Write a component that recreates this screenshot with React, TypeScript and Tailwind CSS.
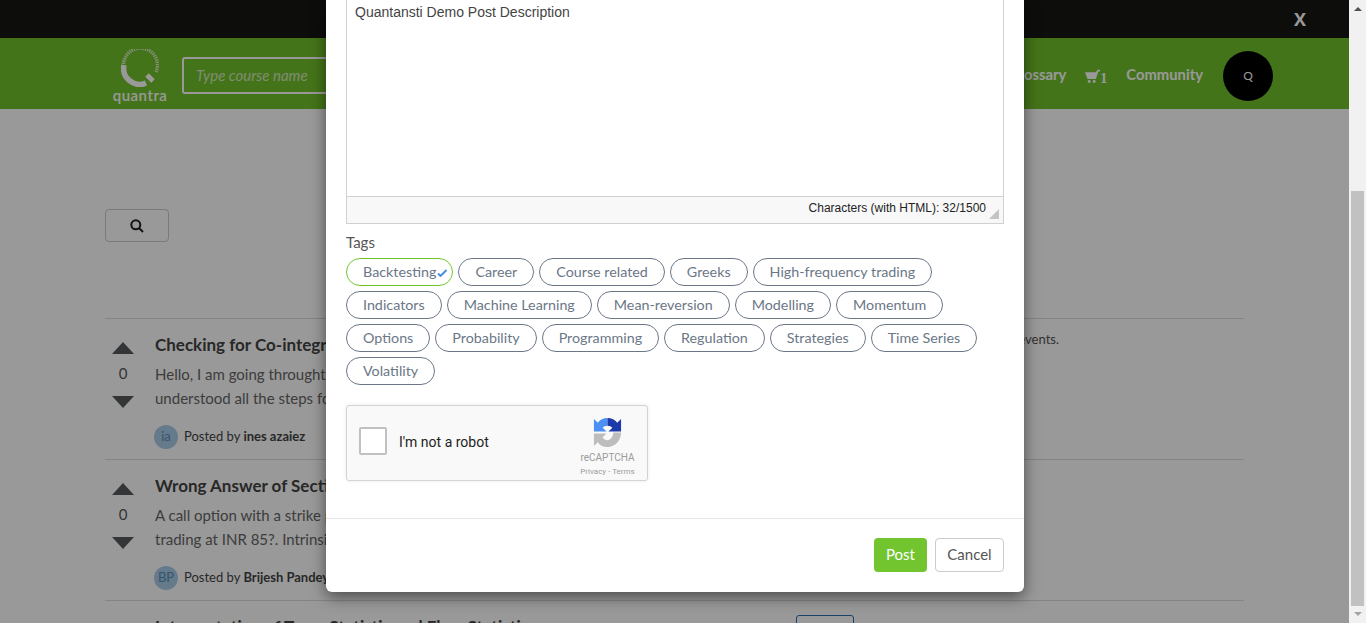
import React from 'react';

const tags = [
  'Backtesting', 'Career', 'Course related', 'Greeks', 'High-frequency trading',
  'Indicators', 'Machine Learning', 'Mean-reversion', 'Modelling', 'Momentum',
  'Options', 'Probability', 'Programming', 'Regulation', 'Strategies', 'Time Series',
  'Volatility',
];

const posts = [
  {
    title: 'Checking for Co-integration',
    lines: ['Hello, I am going throught the', 'understood all the steps for'],
    initials: 'ia',
    author: 'ines azaiez',
  },
  {
    title: 'Wrong Answer of Section',
    lines: ['A call option with a strike price', 'trading at INR 85?. Intrinsic'],
    initials: 'BP',
    author: 'Brijesh Pandey',
  },
];

function Arrow({ down }: { down?: boolean }) {
  return (
    <svg width="22" height="13" viewBox="0 0 22 13" className="block">
      <path d={down ? 'M0 1H22L11 13Z' : 'M11 0L22 12H0Z'} fill="#55595c" />
    </svg>
  );
}

function Logo() {
  return (
    <div className="flex w-[54px] flex-col items-center">
      <svg width="38" height="38" viewBox="0 0 38 38">
        <path d="M2.5 15A17 17 0 1 1 35 23" fill="none" stroke="#fff" strokeWidth="3.5" strokeDasharray="1.5 0.8" opacity="0.7" />
        <path d="M3 16A16 16 0 0 0 25 34" fill="none" stroke="#fff" strokeWidth="5.5" />
        <path d="M26 26L32 32" stroke="#fff" strokeWidth="5" />
      </svg>
      <span className="mt-[1px] font-['Lato',sans-serif] text-[15px] leading-[15px] font-semibold tracking-[0.5px] text-white">quantra</span>
    </div>
  );
}

function Recaptcha() {
  return (
    <div className="flex h-[76px] w-[302px] rounded-[3px] border border-[#d3d3d3] bg-[#f9f9f9] pl-3 shadow-[0_0_4px_rgba(0,0,0,0.08)]">
      <div className="mt-[21px] h-7 w-7 rounded-[2px] border-2 border-[#c1c1c1] bg-white" />
      <span className="mt-[27px] ml-3 font-['Roboto',sans-serif] text-[14px] leading-[18px] text-[#222]">I'm not a robot</span>
      <div className="ml-auto flex w-[70px] flex-col items-center pt-[11px] pr-[9px]">
        <svg width="31" height="31" viewBox="0 0 32 32">
          <path d="M2 2L6 6C8 3 12 1 16 1V9C14 9 12 10 11 11L15 15H2Z" fill="#4a90f5" />
          <path d="M16 1C20 1 24 3 26 6L30 2V15H17L21 11C20 10 18 9 16 9Z" fill="#1c3aa9" />
          <path d="M30 16C30 24 24 31 16 31C11 31 8 29 6 26L2 30V17H15L11 21C12 23 14 24 16 24C19 24 22 20 22 16Z" fill="#bdbdbd" />
        </svg>
        <span className="mt-[4px] font-['Roboto',sans-serif] text-[10px] leading-[12px] text-[#9b9b9b]">reCAPTCHA</span>
        <span className="mt-[2px] font-['Roboto',sans-serif] text-[8px] leading-[12px] text-[#9b9b9b]">Privacy - Terms</span>
      </div>
    </div>
  );
}

export default function App() {
  return (
    <div className="relative flex h-[623px] w-[1366px] overflow-hidden bg-white font-['Lato',sans-serif]">
      <div className="relative w-[1349px] shrink-0 overflow-hidden">
        <div className="flex h-[38px] items-center justify-end bg-[#171614] pr-[43px]">
          <span className="font-['Open_Sans',sans-serif] text-[18px] font-bold text-white">X</span>
        </div>

        <header className="flex h-[71px] items-center bg-[#72c12a] pt-[5px] pl-[113px]">
          <Logo />
          <div className="mt-[-2px] ml-[15px] flex h-[37px] w-[300px] items-center rounded-[3px] border-2 border-white pl-3 text-[15px] text-white/70 italic">
            Type course name
          </div>
          <div className="ml-auto flex items-center text-[14.8px] font-bold text-white">
            <span className="mt-[-3px]">Glossary</span>
            <svg width="15" height="15" viewBox="0 0 18 16" className="ml-[19px]">
              <path d="M0 3H13L15 0H18V2H16L13 11H3Z" fill="#fff" />
              <circle cx="5" cy="14" r="1.7" fill="#fff" />
              <circle cx="11" cy="14" r="1.7" fill="#fff" />
            </svg>
            <span className="mt-1 font-['Liberation_Serif',serif] text-[14px]">1</span>
            <span className="mt-[-3px] ml-[19px]">Community</span>
            <div className="mr-[76px] ml-5 flex h-[50px] w-[50px] items-center justify-center rounded-full bg-black text-[12px] font-normal">Q</div>
          </div>
        </header>

        <div className="px-[105px] pt-[100px]">
          <button className="flex h-[33px] w-16 items-center justify-center rounded-[4px] border border-[#ccc]">
            <svg width="14" height="14" viewBox="0 0 14 14" fill="none" stroke="#222" strokeWidth="2">
              <circle cx="5.8" cy="5.8" r="4.5" />
              <path d="M9 9L13 13" />
            </svg>
          </button>

          <div className="mt-[76px] flex justify-end border-t border-[#ddd] pt-3 pr-[185px] text-[13px] leading-[16px] text-[#555]">events.</div>

          <div className="mt-[-28px]">
            {posts.map((post) => (
              <div key={post.title} className="flex h-[141px] border-b border-[#ddd] pt-[15px]">
                <div className="ml-[7px] flex w-[22px] flex-col items-center">
                  <div className="mt-[8px]"><Arrow /></div>
                  <span className="mt-[9px] text-[15px] leading-[18px] text-[#555]">0</span>
                  <div className="mt-[13px]"><Arrow down /></div>
                </div>
                <div className="ml-[21px]">
                  <h3 className="text-[17px] leading-[22px] font-bold text-[#444]">{post.title}</h3>
                  <p className="mt-[6px] text-[15px] leading-[24px] text-[#666]">{post.lines[0]}<br />{post.lines[1]}</p>
                  <div className="mt-[15px] ml-[-1px] flex items-center text-[13px] text-[#444]">
                    <span className="flex h-6 w-6 items-center justify-center rounded-full bg-[#a8cce8] text-[13px] text-[#5b8db5]">{post.initials}</span>
                    <span className="ml-[6px]">Posted by <b className="font-bold">{post.author}</b></span>
                  </div>
                </div>
              </div>
            ))}
          </div>

          <div className="flex justify-between pt-[14px] pr-[390px]">
            <h3 className="mt-[1px] ml-[50px] text-[17px] leading-[22px] font-bold text-[#444]">Interpretation of Tzero Statistic and Flow Statistic</h3>
            <button className="h-[30px] w-[58px] rounded-[3px] border border-[#2a6fb0] text-[13px] text-[#2a6fb0]">Follow</button>
          </div>
        </div>

        <div className="absolute inset-0 bg-black/40" />

        {/* modal is scrolled, top of it sits above the viewport */}
        <div className="absolute top-0 left-[326px] flex h-[592px] w-[698px] flex-col rounded-b-[6px] bg-white shadow-[0_5px_15px_rgba(0,0,0,0.5)]">
          <div className="mx-5 flex h-[224px] flex-col border border-t-0 border-[#d1d1d1]">
            <div className="flex-1 px-2 pt-[4px] font-['Liberation_Sans',sans-serif] text-[14px] leading-[17px] text-[#444]">Quantansti Demo Post Description</div>
            <div className="relative flex h-[27px] items-center justify-end border-t border-[#d1d1d1] bg-[#f8f8f8] pr-[17px] pb-1 font-['Liberation_Sans',sans-serif] text-[12px] text-[#222]">
              Characters (with HTML): 32/1500
              <span className="absolute right-[4px] bottom-[4px] h-0 w-0 border-b-[10px] border-l-[10px] border-b-[#c4c4c4] border-l-transparent" />
            </div>
          </div>

          <label className="mt-[9px] ml-5 text-[15px] leading-[19px] text-[#555]">Tags</label>
          <div className="mt-[6px] ml-5 flex w-[660px] flex-wrap gap-[5px]">
            {tags.map((tag, i) => (
              <span
                key={tag}
                className={
                  i === 0
                    ? 'relative flex h-7 items-center rounded-[14px] border border-[#72c52f] pr-[16px] pl-4 text-[14.3px] text-[#6b7787]'
                    : 'flex h-7 items-center rounded-[14px] border border-[#6b7787] px-4 text-[14.3px] text-[#6b7787]'
                }
              >
                {tag}
                {i === 0 && (
                  <svg width="10" height="8" viewBox="0 0 10 8" className="absolute top-[10px] right-[5px]">
                    <path d="M1 4.5L3.5 7L9.5 1" fill="none" stroke="#4a90e2" strokeWidth="2" />
                  </svg>
                )}
              </span>
            ))}
          </div>

          <div className="mt-[20px] ml-5"><Recaptcha /></div>

          <div className="mt-[37px] flex justify-end gap-2 border-t border-[#e5e5e5] pt-[19px] pr-5">
            <button className="h-[34px] w-[53px] rounded-[4px] bg-[#72c52f] pb-[2px] text-[15px] text-white">Post</button>
            <button className="h-[34px] w-[69px] rounded-[4px] border border-[#ccc] bg-white pb-[2px] text-[15px] text-[#555]">Cancel</button>
          </div>
        </div>
      </div>

      <aside className="flex w-[17px] flex-col items-center bg-[#f1f1f1]">
        <span className="mt-[7px] h-0 w-0 border-x-[4px] border-b-[4px] border-x-transparent border-b-[#505050]" />
        <div className="mt-[180px] h-[115px] w-[13px] flex-1 bg-[#c1c1c1]" />
        <span className="mt-[6px] mb-[7px] h-0 w-0 border-x-[4px] border-t-[4px] border-x-transparent border-t-[#a3a3a3]" />
      </aside>
    </div>
  );
}
